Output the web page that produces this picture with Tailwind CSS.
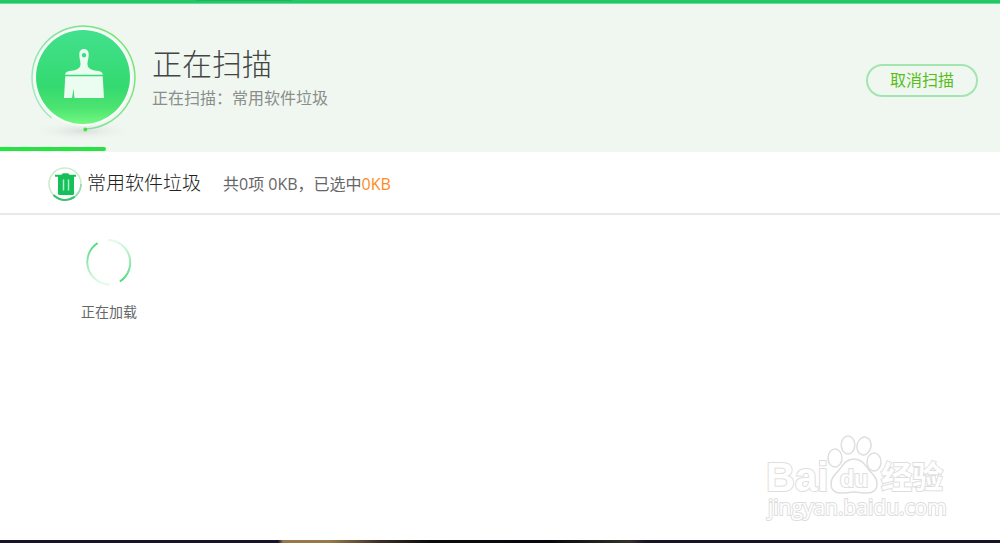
<!DOCTYPE html>
<html lang="zh-CN">
<head>
  <meta charset="UTF-8" />
  <meta name="viewport" content="width=device-width, initial-scale=1.0" />
  <title>正在扫描</title>
  <script src="https://cdn.jsdelivr.net/npm/@tailwindcss/browser@4"></script>
</head>
<body class="min-h-screen flex flex-col bg-white font-['Open_Sans','Noto_Sans_CJK_SC',sans-serif] text-[#555]">
  <!-- Title bar edge -->
  <div class="h-1 bg-[#22c866] border-b border-[#6bdc97]">
    <div class="ml-[196px] w-24 h-px bg-[#1fb45b]"></div>
  </div>

  <!-- Scan header -->
  <header class="relative h-37 bg-[#f0f7f1] flex items-center pl-5 pr-[22px]">
    <svg class="w-[130px] h-[126px] shrink-0" viewBox="0 0 130 126" aria-hidden="true">
      <defs>
        <linearGradient id="disc" x1="0" y1="0" x2="0" y2="1">
          <stop offset="0" stop-color="#42e08d" />
          <stop offset="0.6" stop-color="#34da70" />
          <stop offset="0.82" stop-color="#4be371" />
          <stop offset="1" stop-color="#71f780" />
        </linearGradient>
        <linearGradient id="ring" x1="0" y1="1" x2="1" y2="0.6">
          <stop offset="0" stop-color="#a9edc6" />
          <stop offset="0.5" stop-color="#86dfa0" />
          <stop offset="1" stop-color="#74e774" />
        </linearGradient>
        <radialGradient id="shadow">
          <stop offset="0" stop-color="#d9dfda" />
          <stop offset="1" stop-color="#f0f7f1" stop-opacity="0" />
        </radialGradient>
      </defs>
      <ellipse cx="63" cy="116" rx="54" ry="10" fill="url(#shadow)" />
      <circle cx="63" cy="62" r="49" fill="#f7fcf8" />
      <circle cx="63" cy="62" r="47" fill="url(#disc)" />
      <path d="M31 102.500A51.500 51.500 0 1 1 65 114" fill="none" stroke="url(#ring)" stroke-width="1.500" stroke-linecap="round" />
      <circle cx="65.300" cy="114.500" r="1.900" fill="#3fe23d" />
      <g transform="translate(0 15)" fill="#ebfcf1">
        <path fill-rule="evenodd" d="M64 19C61 19 59.300 21.300 59.300 24C59.300 29 60.500 31 60.500 34C60.500 38 57 40 53 40.500C48 41 45.200 42 45.200 44.800H82.800C82.800 42 80 41 75 40.500C71 40 67.500 38 67.500 34C67.500 31 68.700 29 68.700 24C68.700 21.300 67 19 64 19ZM64 23A2.200 2.200 0 1 1 64 27.400A2.200 2.200 0 1 1 64 23Z" />
        <path d="M45.300 46.200H82.700L84 68H54.500L53.500 59L52 68H44Z" />
      </g>
    </svg>
    <div class="ml-[2px] flex-1">
      <h1 class="text-[30px] leading-10 font-light text-[#444]">正在扫描</h1>
      <p class="text-base leading-7 text-[#8a8e8a]">正在扫描：常用软件垃圾</p>
    </div>
    <button class="mt-1 w-28 h-[33px] rounded-full border-2 border-[#a3e5b1] text-base leading-none text-[#56bd1a] cursor-pointer">取消扫描</button>
    <!-- Progress -->
    <div class="absolute left-0 bottom-0 mb-px h-1 rounded-r-sm bg-[repeating-linear-gradient(120deg,#1fe93a_0_10px,#35d94e_10px_18px)]" style="width: 10.6%" role="progressbar" aria-label="扫描进度" aria-valuenow="11"></div>
  </header>

  <main class="flex-1 flex flex-col">
    <section class="h-[63px] pt-[2px] border-b-2 border-[#e9e9e9] flex items-center pl-[47px]">
      <svg class="w-9 h-9 shrink-0" viewBox="0 0 36 36" aria-hidden="true">
        <circle cx="18" cy="18" r="16" fill="none" stroke="#cdeccd" stroke-width="1.600" />
        <path d="M34 18A16 16 0 0 1 18 34" fill="none" stroke="#8fdcae" stroke-width="1.600" />
        <path d="M7 29.600A16 16 0 0 0 27 31.200" fill="none" stroke="#35c46f" stroke-width="2" stroke-linecap="round" />
        <path fill="#14c158" d="M8 8.800H14.500Q15 7.300 16.500 7.300H20.500Q22 7.300 22.500 8.800H29V10.800H27V27.500Q27 29 25.500 29H12.500Q11 29 11 27.500V10.800H8Z" />
        <path d="M16.500 13.500V24.500M21.500 13.500V24.500" stroke="#b9efcd" stroke-width="1.500" />
      </svg>
      <h2 class="ml-1 text-[19px] font-light text-[#222]">常用软件垃圾</h2>
      <p class="ml-[22px] text-base text-[#666]">共0项 0KB，已选中<span class="text-[#ff8a24]">0KB</span></p>
    </section>

    <section class="pl-[81px] pt-6">
      <div class="w-14 flex flex-col items-center">
        <svg class="w-12 h-12" viewBox="0 0 48 48" fill="none" stroke-width="2" aria-hidden="true">
          <defs>
            <linearGradient id="armLeft" x1="0" y1="0" x2="0" y2="1">
              <stop offset="0" stop-color="#4bdc7b" />
              <stop offset="1" stop-color="#e5faeb" />
            </linearGradient>
            <linearGradient id="armRight" x1="0" y1="1" x2="0" y2="0">
              <stop offset="0" stop-color="#4bdc7b" />
              <stop offset="1" stop-color="#e5faeb" />
            </linearGradient>
          </defs>
          <path d="M12 4.500A22.500 22.500 0 0 0 24 45.500" stroke="url(#armLeft)" stroke-linecap="round" />
          <path d="M35.500 42A22.500 22.500 0 0 0 24 1" stroke="url(#armRight)" stroke-linecap="round" />
        </svg>
        <p class="mt-[15px] text-sm whitespace-nowrap text-[#666]">正在加载</p>
      </div>
    </section>
  </main>

  <!-- Watermark -->
  <svg class="absolute right-[50px] bottom-[18px] w-[190px] h-[94px]" viewBox="0 0 190 94" fill="#fff" stroke="#dedede" stroke-width="1.500" role="img" aria-label="Baidu 经验">
    <g font-family="'Liberation Sans', 'Noto Sans CJK SC', sans-serif" font-weight="bold" stroke-width="2" paint-order="stroke">
      <text x="6" y="60" font-size="40">Bai</text>
      <text x="121" y="57" font-size="31">经验</text>
      <text x="8" y="84" font-size="21" font-weight="normal" font-family="'Open Sans', sans-serif">jingyan.baidu.com</text>
    </g>
    <ellipse cx="75" cy="27" rx="7" ry="9" />
    <ellipse cx="88" cy="14" rx="6.800" ry="9" />
    <ellipse cx="104" cy="15" rx="7" ry="9" transform="rotate(12 104 15)" />
    <ellipse cx="114" cy="31" rx="7" ry="9" />
    <path d="M94 28C86 28 83 34 79 39C75 44 71 46 71 53C71 59 75 62 81 62C87 62 90 61 94 61C98 61 101 62 107 62C113 62 117 59 117 53C117 46 113 44 109 39C105 34 102 28 94 28Z" />
    <text x="94" y="56" text-anchor="middle" font-family="'Liberation Sans', sans-serif" font-size="23" font-weight="bold" stroke-width="2" paint-order="stroke">du</text>
  </svg>

  <!-- Desktop strip below the window -->
  <footer class="h-[3px] bg-[linear-gradient(90deg,#19122b_0%,#19122b_27.800%,#96794a_28.300%,#96794a_33%,#3b2d24_38%,#0b0b0e_43%,#08080c_55%,#34312a_63%,#191326_64.500%,#191326_100%)]"></footer>
</body>
</html>
